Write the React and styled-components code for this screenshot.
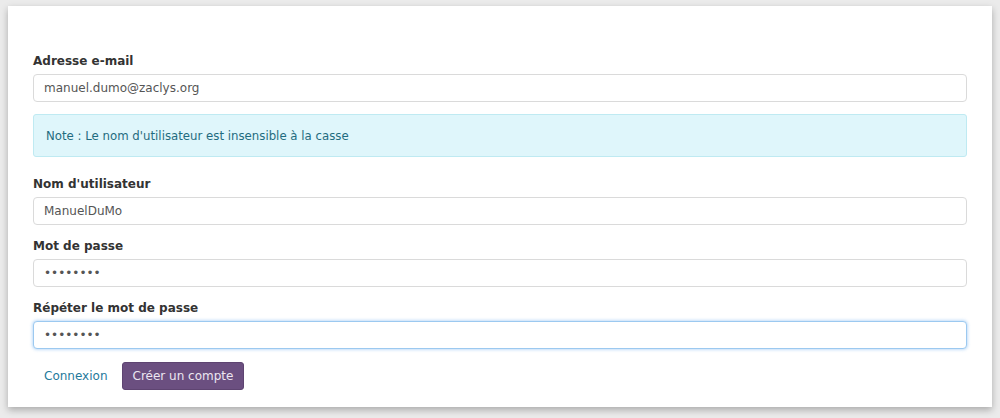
import React from 'react';
import styled, { createGlobalStyle, css } from 'styled-components';

const GlobalStyle = createGlobalStyle`
  html, body {
    margin: 0;
    padding: 0;
    background-color: #ebebeb;
    font-family: "DejaVu Sans", "Noto Sans", sans-serif;
  }
  * {
    box-sizing: border-box;
  }
`;

const Page = styled.div`
  padding: 6px 8px 0 8px;
  height: 418px;
`;

const Card = styled.form`
  background-color: #fff;
  padding: 46px 25px 17px 25px;
  box-shadow: 0 3px 7px rgba(0, 0, 0, 0.28);
`;

const Group = styled.div`
  display: flex;
  flex-direction: column;
  margin-bottom: 12px;
`;

const Label = styled.label`
  font-size: 12px;
  font-weight: bold;
  line-height: 18px;
  color: #333;
  margin-bottom: 4px;
`;

const Input = styled.input`
  height: 28px;
  width: 100%;
  padding: 0 10px;
  font-family: inherit;
  font-size: 12px;
  color: #555;
  background-color: #fff;
  border: 1px solid #dadada;
  border-radius: 4px;
  outline: none;
  ${(p) =>
    p.$focused &&
    css`
      border-color: #9cc9f0;
      box-shadow: 0 0 3px 1px rgba(120, 180, 240, 0.45);
    `}
`;

const Note = styled.div`
  display: flex;
  align-items: center;
  height: 43px;
  padding: 0 12px;
  margin-bottom: 18px;
  font-size: 11.75px;
  color: #1f6c80;
  background-color: #dff6fb;
  border: 1px solid #bfeaf2;
  border-radius: 3px;
`;

const Actions = styled.div`
  display: flex;
  align-items: center;
  padding-top: 1px;
`;

const LinkButton = styled.a`
  font-size: 12px;
  color: #1f7a9c;
  text-decoration: none;
  padding: 0 14px 0 11px;
  line-height: 28px;
`;

const Submit = styled.button`
  height: 28px;
  padding: 0 10px;
  font-family: inherit;
  font-size: 12px;
  color: #ece6f0;
  background-color: #6b4f80;
  border: 1px solid #5e4471;
  border-radius: 3px;
`;

const fields = [
  { id: 'email', label: 'Adresse e-mail', type: 'text', value: 'manuel.dumo@zaclys.org' },
  { id: 'login', label: "Nom d'utilisateur", type: 'text', value: 'ManuelDuMo' },
  { id: 'password', label: 'Mot de passe', type: 'password', value: 'password' },
  { id: 'confirm', label: 'Répéter le mot de passe', type: 'password', value: 'password', focused: true },
];

const Field = ({ field }) => (
  <Group>
    <Label htmlFor={field.id}>{field.label}</Label>
    <Input id={field.id} type={field.type} defaultValue={field.value} $focused={field.focused} />
  </Group>
);

const App = () => {
  return (
    <Page>
      <GlobalStyle />
      <Card onSubmit={(e) => e.preventDefault()}>
        <Field field={fields[0]} />
        <Note>Note : Le nom d'utilisateur est insensible à la casse</Note>
        {fields.slice(1).map((f) => (
          <Field key={f.id} field={f} />
        ))}
        <Actions>
          <LinkButton href="#">Connexion</LinkButton>
          <Submit type="submit">Créer un compte</Submit>
        </Actions>
      </Card>
    </Page>
  );
};

export default App;
